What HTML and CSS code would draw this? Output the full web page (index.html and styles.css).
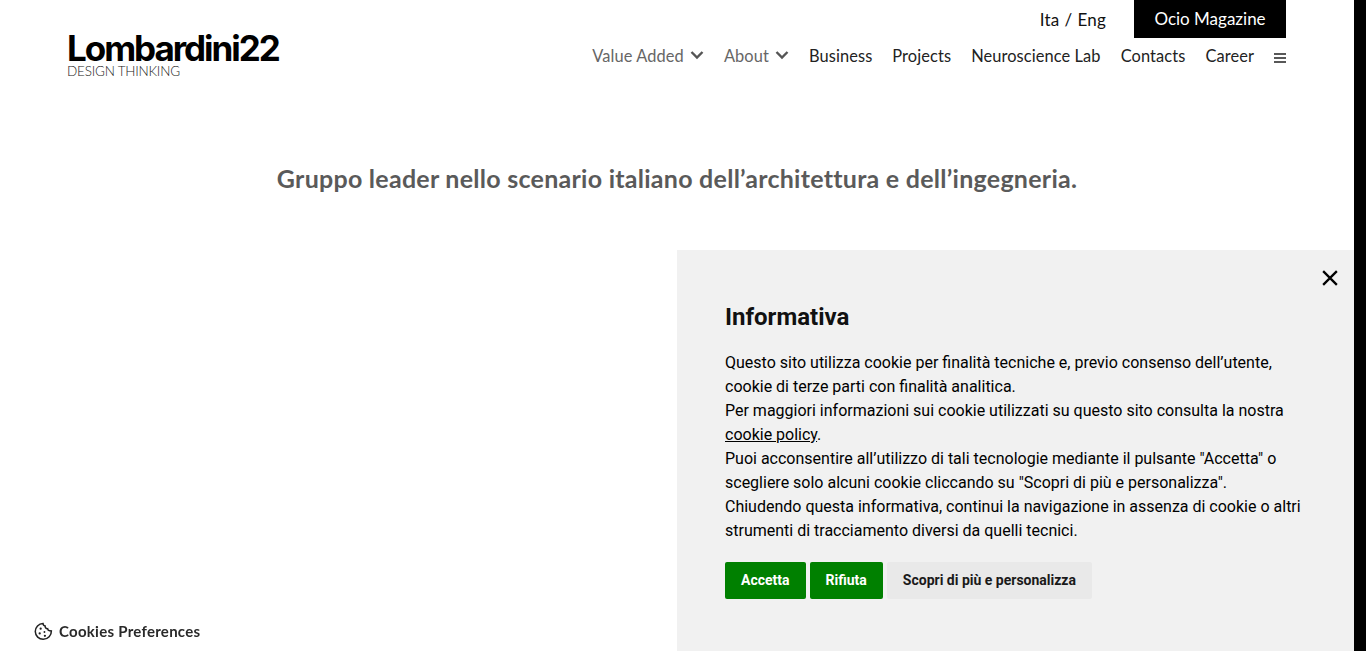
FILE: index.html
```html
<!DOCTYPE html>
<html lang="it">
<head>
    <meta charset="UTF-8">
    <meta name="viewport" content="width=device-width, initial-scale=1.0">
    <title>Lombardini22</title>
    <link rel="stylesheet" href="styles.css">
</head>
<body>
    <div class="page">
        <header class="site-header">
            <a class="logo" href="#">
                <span class="logo-name">Lombardini22</span>
                <span class="logo-sub">DESIGN THINKING</span>
            </a>
            <div class="header-right">
                <div class="top-row">
                    <span class="lang">Ita / Eng</span>
                    <a class="magazine" href="#">Ocio Magazine</a>
                </div>
                <nav class="main-nav">
                    <a class="muted" href="#">Value Added
                        <svg class="chevron" viewBox="0 0 14 10"><path d="M1.5 2 7 7.5 12.5 2"/></svg>
                    </a>
                    <a class="muted" href="#">About
                        <svg class="chevron" viewBox="0 0 14 10"><path d="M1.5 2 7 7.5 12.5 2"/></svg>
                    </a>
                    <a href="#">Business</a>
                    <a href="#">Projects</a>
                    <a href="#">Neuroscience Lab</a>
                    <a href="#">Contacts</a>
                    <a href="#">Career</a>
                    <svg class="burger" viewBox="0 0 12 10"><path d="M0 1h12M0 5h12M0 9h12"/></svg>
                </nav>
            </div>
        </header>
        <h2 class="tagline">Gruppo leader nello scenario italiano dell’architettura e dell’ingegneria.</h2>
    </div>
    <div class="scrollbar"></div>

    <a class="cookie-prefs" href="#">
        <svg class="cookie-icon" viewBox="0 0 20 20">
            <path class="cookie-line" d="M9.5 1.6c.1 1.6 1 2.4 2.2 2.5-.1 1.7 1 3 2.6 2.9.2 1.3 1.3 2.2 2.3 2.1l1.7.2c.2 4.8-3.6 8.9-8.5 8.9a8.3 8.3 0 0 1-.3-16.6z"/>
            <circle cx="7" cy="7" r="1.2"/>
            <circle cx="6" cy="12" r="1.2"/>
            <circle cx="11" cy="10.5" r="1"/>
            <circle cx="11.5" cy="14.5" r="1.2"/>
        </svg>
        Cookies Preferences
    </a>

    <aside class="cookie-banner">
        <button class="close-btn" aria-label="Chiudi">
            <svg viewBox="0 0 14 14"><path d="M1 1l12 12M13 1 1 13"/></svg>
        </button>
        <h3>Informativa</h3>
        <p>Questo sito utilizza cookie per finalità tecniche e, previo consenso dell’utente, cookie di terze parti con finalità analitica.<br>
        Per maggiori informazioni sui cookie utilizzati su questo sito consulta la nostra <a href="#">cookie policy</a>.<br>
        Puoi acconsentire all’utilizzo di tali tecnologie mediante il pulsante "Accetta" o scegliere solo alcuni cookie cliccando su "Scopri di più e personalizza".<br>
        Chiudendo questa informativa, continui la navigazione in assenza di cookie o altri strumenti di tracciamento diversi da quelli tecnici.</p>
        <div class="banner-actions">
            <button class="btn btn-green btn-accept">Accetta</button>
            <button class="btn btn-green btn-reject">Rifiuta</button>
            <button class="btn btn-grey">Scopri di più e personalizza</button>
        </div>
    </aside>
</body>
</html>
```

FILE: styles.css
```css
html, body {
    height: 100%;
}
body {
    margin: 0;
    display: flex;
    overflow: hidden;
    background-color: #fff;
    color: #222;
    font-family: Lato, "Open Sans", sans-serif;
}
a {
    color: inherit;
    text-decoration: none;
}
.page {
    flex: 1;
    min-width: 0;
}
.scrollbar {
    width: 12px;
    background-color: #000;
}

/* header */
.site-header {
    display: flex;
    justify-content: space-between;
    padding: 0 68px 0 67px;
}
.logo {
    display: flex;
    flex-direction: column;
    margin-top: 32px;
    color: #000;
}
.logo-name {
    font-family: Inter, sans-serif;
    font-size: 35px;
    font-weight: 700;
    line-height: 33px;
    letter-spacing: -2.05px;
}
.logo-sub {
    font-size: 13.5px;
    line-height: 12px;
    font-weight: 300;
    letter-spacing: -0.22px;
    color: #222;
}
.header-right {
    display: flex;
    flex-direction: column;
    align-items: flex-end;
}
.top-row {
    display: flex;
    align-items: center;
    gap: 28px;
    height: 38px;
}
.lang {
    font-size: 17px;
    letter-spacing: 0.2px;
    word-spacing: 0.5px;
    color: #111;
}
.magazine {
    display: block;
    width: 152px;
    line-height: 38px;
    text-align: center;
    background-color: #000;
    color: #fff;
    font-size: 17px;
}
.main-nav {
    display: flex;
    align-items: center;
    gap: 20px;
    height: 34px;
    font-size: 16.4px;
    letter-spacing: 0.1px;
}
.main-nav a {
    display: flex;
    align-items: center;
}
.main-nav .muted {
    color: #666;
}
.chevron {
    width: 14px;
    height: 10px;
    margin: -1px 0 0 6px;
    fill: none;
    stroke: #555;
    stroke-width: 2.4;
}
.burger {
    width: 12px;
    height: 10px;
    margin-top: 6px;
    fill: none;
    stroke: #222;
    stroke-width: 1.4;
}
.tagline {
    margin: 83px 0 0;
    text-align: center;
    font-size: 25px;
    line-height: 36px;
    font-weight: 700;
    letter-spacing: 0.26px;
    color: #5a5a5a;
}

/* cookie preferences link */
.cookie-prefs {
    position: fixed;
    left: 34px;
    bottom: 10px;
    display: flex;
    align-items: center;
    gap: 6px;
    font-size: 15px;
    font-weight: 700;
    line-height: 20px;
    letter-spacing: 0.27px;
    color: #2a2a2a;
}
.cookie-icon {
    width: 19px;
    height: 19px;
    fill: #222;
}
.cookie-line {
    fill: none;
    stroke: #222;
    stroke-width: 1.6;
}

/* cookie banner */
.cookie-banner {
    position: fixed;
    left: 677px;
    right: 12px;
    top: 250px;
    bottom: 0;
    box-sizing: border-box;
    padding: 48px 48px 0;
    background-color: #f1f1f1;
    font-family: Roboto, sans-serif;
    color: #000;
}
.cookie-banner h3 {
    margin: 0 0 15px;
    font-size: 24px;
    line-height: 38px;
    font-weight: 700;
    color: #111;
}
.cookie-banner p {
    margin: 0 0 19px;
    font-size: 16px;
    line-height: 24px;
}
.cookie-banner p a {
    text-decoration: underline;
}
.close-btn {
    position: absolute;
    top: 20px;
    right: 16px;
    width: 16px;
    height: 16px;
    padding: 0;
    border: none;
    background: none;
}
.close-btn svg {
    display: block;
    fill: none;
    stroke: #000;
    stroke-width: 2;
}
.banner-actions {
    display: flex;
    gap: 4px;
}
.btn {
    height: 37px;
    padding: 0 16px 2px;
    border: none;
    border-radius: 2px;
    font-family: Roboto, sans-serif;
    font-size: 14px;
    font-weight: 700;
}
.btn-green {
    background-color: #008000;
    color: #fff;
}
.btn-grey {
    background-color: #e9e9e9;
    color: #1a1a1a;
}
```
